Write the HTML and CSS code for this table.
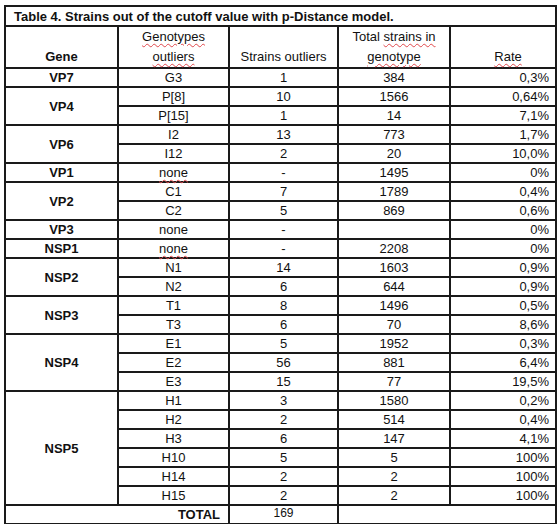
FILE: index.html
```html
<!DOCTYPE html>
<html>
<head>
<meta charset="utf-8">
<link rel="stylesheet" href="styles.css">
</head>
<body>
<table class="tbl">
  <colgroup>
    <col class="c1"><col class="c2"><col class="c3"><col class="c4"><col class="c5">
  </colgroup>
  <tr class="title-row"><td colspan="5" class="title">Table 4. Strains out of the cutoff value with p-Distance model.</td></tr>
  <tr class="head">
    <td class="gene">Gene</td>
    <td class="ctr"><span class="sp">Genotypes</span><br><span class="sp">outliers</span></td>
    <td class="ctr">Strains outliers</td>
    <td class="ctr">Total <span class="sp">strains in</span><br><span class="sp">genotype</span></td>
    <td class="rate-h"><span class="sp">Rate</span></td>
  </tr>
  <tr><td class="gene">VP7</td><td>G3</td><td>1</td><td>384</td><td class="r">0,3%</td></tr>
  <tr><td class="gene" rowspan="2">VP4</td><td>P[8]</td><td>10</td><td>1566</td><td class="r">0,64%</td></tr>
  <tr><td>P[15]</td><td>1</td><td>14</td><td class="r">7,1%</td></tr>
  <tr><td class="gene" rowspan="2">VP6</td><td>I2</td><td>13</td><td>773</td><td class="r">1,7%</td></tr>
  <tr><td>I12</td><td>2</td><td>20</td><td class="r">10,0%</td></tr>
  <tr><td class="gene">VP1</td><td><span class="sp">none</span></td><td>-</td><td>1495</td><td class="r">0%</td></tr>
  <tr><td class="gene" rowspan="2">VP2</td><td>C1</td><td>7</td><td>1789</td><td class="r">0,4%</td></tr>
  <tr><td>C2</td><td>5</td><td>869</td><td class="r">0,6%</td></tr>
  <tr><td class="gene">VP3</td><td>none</td><td>-</td><td></td><td class="r">0%</td></tr>
  <tr><td class="gene">NSP1</td><td><span class="sp">none</span></td><td>-</td><td>2208</td><td class="r">0%</td></tr>
  <tr><td class="gene" rowspan="2">NSP2</td><td>N1</td><td>14</td><td>1603</td><td class="r">0,9%</td></tr>
  <tr><td>N2</td><td>6</td><td>644</td><td class="r">0,9%</td></tr>
  <tr><td class="gene" rowspan="2">NSP3</td><td>T1</td><td>8</td><td>1496</td><td class="r">0,5%</td></tr>
  <tr><td>T3</td><td>6</td><td>70</td><td class="r">8,6%</td></tr>
  <tr><td class="gene" rowspan="3">NSP4</td><td>E1</td><td>5</td><td>1952</td><td class="r">0,3%</td></tr>
  <tr><td>E2</td><td>56</td><td>881</td><td class="r">6,4%</td></tr>
  <tr><td>E3</td><td>15</td><td>77</td><td class="r">19,5%</td></tr>
  <tr><td class="gene" rowspan="6">NSP5</td><td>H1</td><td>3</td><td>1580</td><td class="r">0,2%</td></tr>
  <tr><td>H2</td><td>2</td><td>514</td><td class="r">0,4%</td></tr>
  <tr><td>H3</td><td>6</td><td>147</td><td class="r">4,1%</td></tr>
  <tr><td>H10</td><td>5</td><td>5</td><td class="r">100%</td></tr>
  <tr><td>H14</td><td>2</td><td>2</td><td class="r">100%</td></tr>
  <tr><td>H15</td><td>2</td><td>2</td><td class="r">100%</td></tr>
  <tr><td colspan="2" class="total">TOTAL</td><td class="sum">169</td><td colspan="2"></td></tr>
</table>
</body>
</html>
```

FILE: styles.css
```css
html, body {
  margin: 0;
  padding: 0;
  background: #fff;
}
body {
  padding: 5px 0 0 4px;
}
.tbl {
  border-collapse: collapse;
  table-layout: fixed;
  width: 551px;
  font-family: "Liberation Sans", Arial, sans-serif;
  font-size: 13px;
  color: #111;
  border: 2px solid #111;
}
.c1 { width: 113px; }
.c2 { width: 111px; }
.c3 { width: 109px; }
.c4 { width: 112px; }
.c5 { width: 106px; }
.tbl td {
  border: 2px solid #1a1a1a;
  padding: 0;
  height: 17px;
  line-height: 17px;
  text-align: center;
  vertical-align: middle;
  white-space: nowrap;
}
.tbl .title-row td {
  height: 18px;
  font-weight: bold;
  text-align: left;
  padding-left: 8px;
  font-size: 13px;
}
.tbl .head td {
  height: 38px;
  line-height: 20px;
  vertical-align: bottom;
  padding-bottom: 0;
}
.tbl .head .rate-h {
  text-align: center;
  padding-left: 10px;
}
.tbl td.gene {
  font-weight: bold;
}
.tbl td.r {
  text-align: right;
  padding-right: 6px;
}
.tbl td.total {
  font-weight: bold;
  text-align: right;
  padding-right: 8px;
}
.tbl td.sum {
  font-size: 12px;
  vertical-align: top;
  line-height: 15px;
}
.sp {
  text-decoration: underline wavy #e0484c;
  text-decoration-thickness: 1px;
  text-underline-offset: 2px;
}
```
